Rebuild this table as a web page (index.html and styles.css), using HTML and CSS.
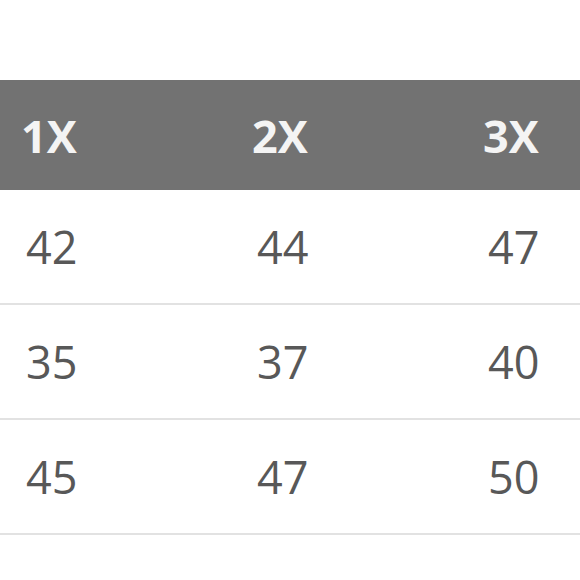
FILE: index.html
```html
<!DOCTYPE html>
<html>
<head>
<meta charset="utf-8">
<link rel="stylesheet" href="styles.css">
</head>
<body>
<div class="page">
  <div class="size-table">
    <div class="row head">
      <div class="cell">1X</div>
      <div class="cell">2X</div>
      <div class="cell">3X</div>
    </div>
    <div class="row">
      <div class="cell">42</div>
      <div class="cell">44</div>
      <div class="cell">47</div>
    </div>
    <div class="row">
      <div class="cell">35</div>
      <div class="cell">37</div>
      <div class="cell">40</div>
    </div>
    <div class="row">
      <div class="cell">45</div>
      <div class="cell">47</div>
      <div class="cell">50</div>
    </div>
  </div>
</div>
</body>
</html>
```
FILE: styles.css
```css
html, body {
  margin: 0;
  padding: 0;
  background: #ffffff;
}
.page {
  width: 580px;
  height: 580px;
  overflow: hidden;
  padding-top: 80px;
  box-sizing: border-box;
  font-family: "Open Sans", "DejaVu Sans", sans-serif;
}
.size-table {
  display: flex;
  flex-direction: column;
  width: 700px;
}
.row {
  display: grid;
  grid-template-columns: 231px 231px 231px;
  align-items: center;
  padding-left: 22px;
  height: 113px;
  border-bottom: 2px solid #e2e2e2;
  color: #585858;
  font-size: 45px;
  font-weight: 400;
}
.row.head {
  height: 110px;
  border-bottom: none;
  background: #727272;
  color: #f4f4f4;
  font-weight: 700;
  padding-left: 21px;
}
.cell {
  line-height: 1;
  padding-left: 4px;
}
.head .cell {
  padding-left: 0;
}
```
